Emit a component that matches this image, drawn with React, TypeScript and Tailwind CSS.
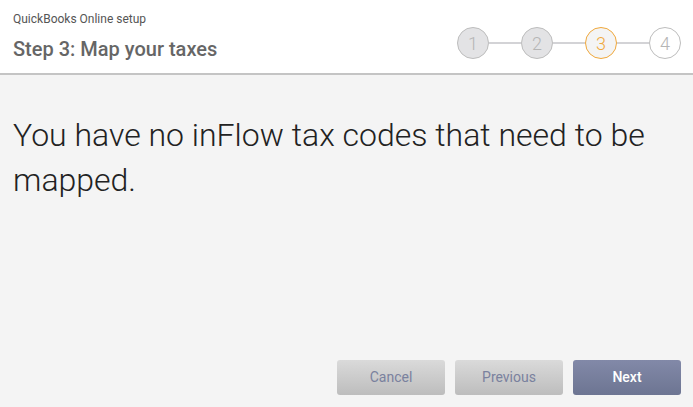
import React from "react";

const steps = [1, 2, 3, 4];
const current = 3;

const StepCircle: React.FC<{ n: number }> = ({ n }) => {
  let cls = "border-[#bdbdbd] bg-[#e3e3e5] text-[#b5b5b5]";
  if (n === current) {
    cls = "border-[#f0a83c] bg-[#f4f4f4] text-[#f0a83c]";
  } else if (n > current) {
    cls = "border-[#bdbdbd] bg-white text-[#b5b5b5]";
  }
  return (
    <div
      className={`flex h-[32px] w-[32px] items-center justify-center rounded-full border text-[18px] font-light ${cls}`}
    >
      {n}
    </div>
  );
};

const App: React.FC = () => {
  return (
    <div
      className="flex h-[407px] w-[693px] flex-col bg-[#f4f4f4]"
      style={{ fontFamily: "Roboto, 'Liberation Sans', sans-serif" }}
    >
      <div className="flex h-[75px] items-start justify-between border-b-2 border-[#c4c4c4] bg-white">
        <div className="pl-[13px] pt-[11px]">
          <div className="text-[12px] leading-[16px] text-[#555555]">QuickBooks Online setup</div>
          <div className="mt-[10px] text-[20px] font-medium leading-[24px] text-[#666666]">
            Step 3: Map your taxes
          </div>
        </div>
        <div className="flex items-center pr-[12px] pt-[27px]">
          {steps.map((n, i) => (
            <React.Fragment key={n}>
              {i > 0 && <div className="h-[2px] w-[32px] bg-[#d3d3d6]" />}
              <StepCircle n={n} />
            </React.Fragment>
          ))}
        </div>
      </div>

      <div className="flex-1 px-[13px] pt-[38px]">
        <p className="text-[32px] font-light leading-[45px] text-[#222222]">
          You have no inFlow tax codes that need to be mapped.
        </p>
      </div>

      <div className="flex justify-end gap-[10px] px-[12px] pb-[12px]">
        <button className="h-[35px] w-[108px] rounded-[3px] bg-gradient-to-b from-[#dadada] to-[#bdbdbd] text-[14px] text-[#7a819e]">
          Cancel
        </button>
        <button className="h-[35px] w-[108px] rounded-[3px] bg-gradient-to-b from-[#dadada] to-[#bdbdbd] text-[14px] text-[#7a819e]">
          Previous
        </button>
        <button className="h-[35px] w-[108px] rounded-[3px] bg-gradient-to-b from-[#8289a8] to-[#6d7592] text-[14px] font-medium text-white">
          Next
        </button>
      </div>
    </div>
  );
};

export default App;
